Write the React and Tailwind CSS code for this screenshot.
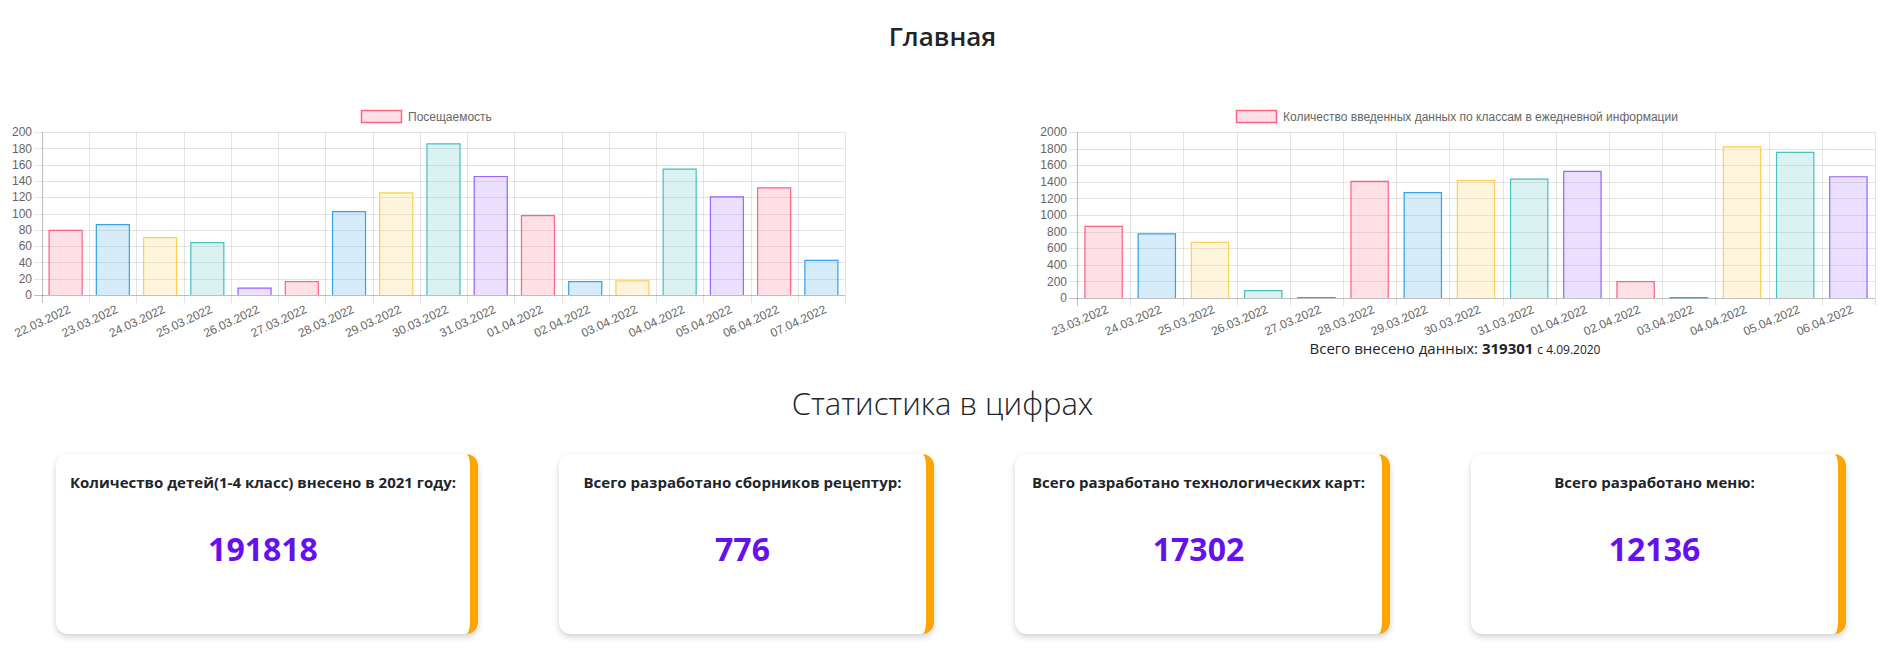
import React from 'react';

const PALETTE = [
  ['rgba(255,99,132,0.2)', 'rgb(255,99,132)'],
  ['rgba(54,162,235,0.2)', 'rgb(54,162,235)'],
  ['rgba(255,206,86,0.2)', 'rgb(255,206,86)'],
  ['rgba(75,192,192,0.2)', 'rgb(75,192,192)'],
  ['rgba(153,102,255,0.2)', 'rgb(153,102,255)'],
];

const visitLabels = [
  '22.03.2022', '23.03.2022', '24.03.2022', '25.03.2022', '26.03.2022', '27.03.2022',
  '28.03.2022', '29.03.2022', '30.03.2022', '31.03.2022', '01.04.2022', '02.04.2022',
  '03.04.2022', '04.04.2022', '05.04.2022', '06.04.2022', '07.04.2022',
];
const visitValues = [80, 87, 71, 65, 9, 17, 103, 126, 186, 146, 98, 17, 18, 155, 121, 132, 43];

const entryLabels = visitLabels.slice(1, 16);
const entryValues = [870, 778, 677, 96, 12, 1411, 1275, 1419, 1439, 1531, 204, 10, 1828, 1760, 1467];

const stats = [
  { title: 'Количество детей(1-4 класс) внесено в 2021 году:', value: '191818', wide: true },
  { title: 'Всего разработано сборников рецептур:', value: '776' },
  { title: 'Всего разработано технологических карт:', value: '17302' },
  { title: 'Всего разработано меню:', value: '12136' },
];

const FONT = "'Liberation Sans', Arial, sans-serif";

function BarChart({ width, height, l, r, t, b, max, step, values, labels, legend, legendX, angle, labelGap }) {
  const n = values.length;
  const cw = (r - l) / n;
  const ticks = [];
  for (let v = 0; v <= max; v += step) ticks.push(v);
  const yOf = (v) => b - (v / max) * (b - t);
  const px = (v) => Math.round(v) + 0.5;

  return (
    <svg width={width} height={height} className="block shrink-0 overflow-visible">
      <rect x={legendX + 0.5} y={10.5} width={40} height={12} fill={PALETTE[0][0]} stroke={PALETTE[0][1]} strokeWidth={1.5} />
      <text x={legendX + 47} y={16.5} dy="0.35em" fontFamily={FONT} fontSize={12} fill="#666">
        {legend}
      </text>

      {ticks.map((v) => (
        <g key={`h-${v}`}>
          <line
            x1={l - 8}
            x2={r}
            y1={px(yOf(v))}
            y2={px(yOf(v))}
            stroke={v === 0 ? 'rgba(0,0,0,0.25)' : 'rgba(0,0,0,0.1)'}
          />
          <text x={l - 10} y={yOf(v)} dy="0.35em" textAnchor="end" fontFamily={FONT} fontSize={12} fill="#666">
            {v}
          </text>
        </g>
      ))}

      {Array.from({ length: n + 1 }).map((_, i) => (
        <line
          key={`v-${i}`}
          x1={px(l + i * cw)}
          x2={px(l + i * cw)}
          y1={t}
          y2={b + 8}
          stroke={i === 0 ? 'rgba(0,0,0,0.25)' : 'rgba(0,0,0,0.1)'}
        />
      ))}

      {values.map((v, i) => {
        const [fill, stroke] = PALETTE[i % PALETTE.length];
        const bw = cw * 0.72;
        const x = l + i * cw + (cw - bw) / 2;
        const top = yOf(v);
        return (
          <g key={`bar-${i}`}>
            <rect x={x} y={top} width={bw} height={b - top} fill={fill} />
            <path
              d={`M${x + 0.5} ${b} V${top + 0.5} H${x + bw - 0.5} V${b}`}
              fill="none"
              stroke={stroke}
              strokeWidth={1.2}
            />
          </g>
        );
      })}

      {labels.map((lab, i) => {
        const cx = l + i * cw + cw / 2;
        return (
          <text
            key={lab}
            transform={`translate(${cx + 2},${b + labelGap}) rotate(-${angle})`}
            x={0}
            y={9}
            textAnchor="end"
            fontFamily={FONT}
            fontSize={12}
            fill="#666"
          >
            {lab}
          </text>
        );
      })}
    </svg>
  );
}

function StatCard({ title, value, wide }) {
  return (
    <div
      className={`${wide ? 'w-[422px]' : 'w-[375px]'} h-[180px] bg-white rounded-xl border-r-8 border-[#ffa500] shadow-[0_3px_6px_rgba(0,0,0,0.18)] flex flex-col items-center pt-[17px]`}
    >
      <div className="text-[15px] leading-[22px] font-bold text-[#212529] text-center whitespace-nowrap">{title}</div>
      <div className="mt-[34px] text-[32px] leading-[44px] font-bold text-[#6610f2]">{value}</div>
    </div>
  );
}

export default function App() {
  return (
    <div className="w-[1885px] min-h-[664px] bg-white font-['Open_Sans',sans-serif] text-[#212529]">
      <div className="h-[72px] flex items-center justify-center">
        <h1 className="text-[26px] font-semibold leading-none">Главная</h1>
      </div>

      <div className="mt-[28px] flex justify-between items-start pr-[5px]">
        <BarChart
          width={852}
          height={238}
          l={42}
          r={845}
          t={32}
          b={195}
          max={200}
          step={20}
          values={visitValues}
          labels={visitLabels}
          legend="Посещаемость"
          legendX={361}
          angle={25}
          labelGap={9}
        />
        <div className="flex flex-col items-center">
          <BarChart
            width={850}
            height={238}
            l={47}
            r={845}
            t={32}
            b={198}
            max={2000}
            step={200}
            values={entryValues}
            labels={entryLabels}
            legend="Количество введенных данных по классам в ежедневной информации"
            legendX={206}
            angle={23}
            labelGap={6}
          />
          <p className="text-[15px] leading-[20px]">
            Всего внесено данных: <b className="font-bold">319301</b> <span className="text-[12px]">с 4.09.2020</span>
          </p>
        </div>
      </div>

      <div className="h-[86px] flex items-center justify-center">
        <h2 className="text-[31px] font-light leading-none">Статистика в цифрах</h2>
      </div>

      <div className="mt-[8px] flex gap-[81px] pl-[56px]">
        {stats.map((s) => (
          <StatCard key={s.value} {...s} />
        ))}
      </div>
    </div>
  );
}
